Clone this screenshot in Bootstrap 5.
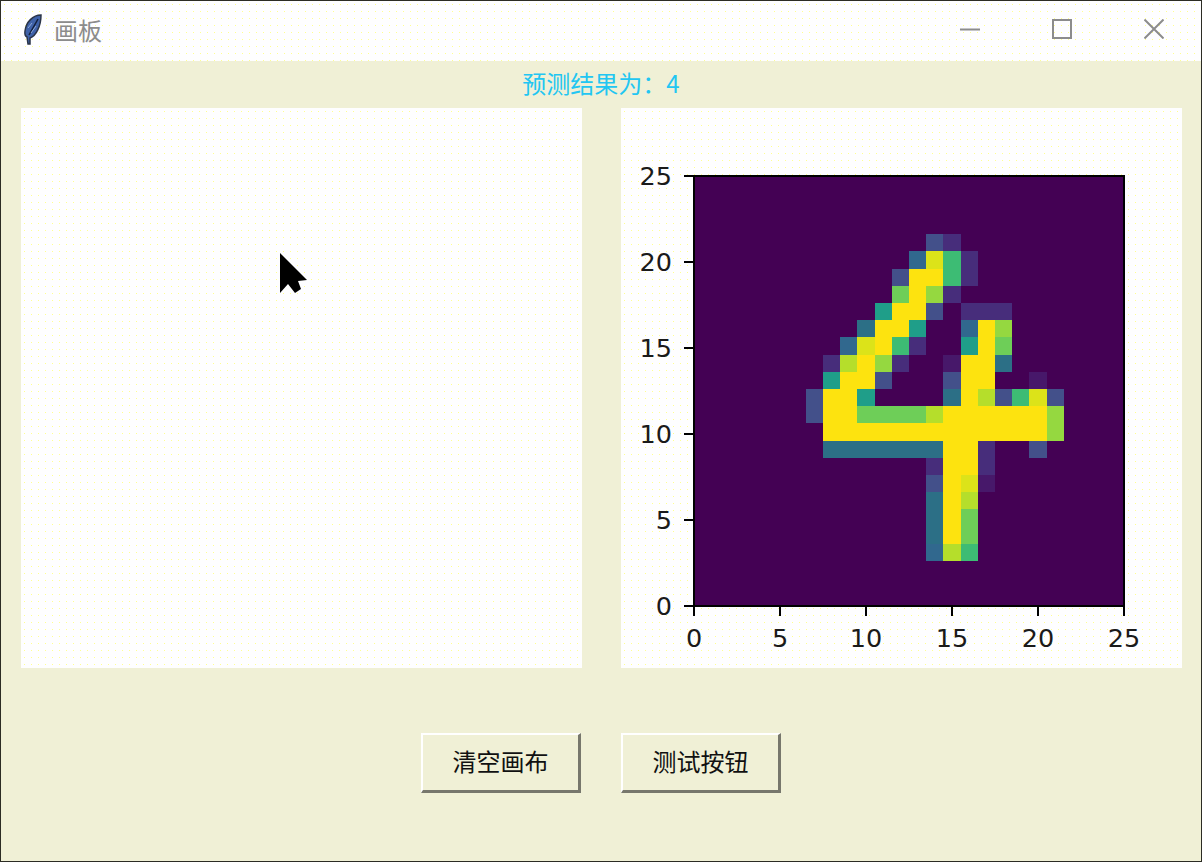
<!DOCTYPE html>
<html lang="zh">

<head>
    <meta charset="UTF-8">
    <meta name="viewport" content="width=device-width, initial-scale=1.0">
    <title>画板</title>
    <link href="https://cdn.jsdelivr.net/npm/bootstrap@5.3.0/dist/css/bootstrap.min.css" rel="stylesheet">
    <style>
        html,
        body {
            height: 100%;
        }

        body {
            margin: 0;
            background: #f0f0d6;
            font-family: "Noto Sans CJK SC", "Liberation Sans", sans-serif;
            overflow: hidden;
        }

        .tk-window {
            width: 1202px;
            height: 862px;
            border: 1px solid #2c2c24;
            background: #f0f0d6;
        }

        .tk-white {
            background: radial-gradient(#ffff90 0.6px, transparent 0.7px) 0 0 / 7px 7px, #fefeff;
        }

        .tk-titlebar {
            height: 60px;
            padding-bottom: 2px;
            color: #8c8c8c;
            font-size: 24px;
        }

        .tk-feather {
            margin-left: 22px;
            margin-right: 11px;
        }

        .tk-ctrl-group {
            margin-right: 1px;
            margin-bottom: 2px;
        }

        .tk-ctrl {
            width: 92px;
        }

        .tk-result {
            height: 47px;
            color: #22c6f2;
            font-size: 24px;
            line-height: 44px;
        }

        .tk-panels {
            gap: 39px;
            padding-left: 20px;
        }

        .tk-panel {
            width: 561px;
            height: 560px;
        }

        .tk-cursor {
            left: 258px;
            top: 144px;
        }

        .tk-buttons {
            gap: 40px;
            margin-top: 65px;
            padding-left: 420px;
        }

        .tk-btn {
            width: 160px;
            height: 60px;
            padding: 0 0 4px;
            border-radius: 0;
            border-width: 2px 3px 3px 2px;
            border-style: solid;
            border-color: #fff #77776c #77776c #fff;
            color: #111;
            font-size: 24px;
            background: transparent;
        }

        .plot-label {
            font-family: "DejaVu Sans", sans-serif;
            font-size: 25.5px;
            fill: #1a1a1a;
        }
    </style>
</head>

<body>
    <div class="tk-window">
        <div class="tk-titlebar tk-white d-flex align-items-center">
            <svg class="tk-feather" width="20" height="32" viewBox="0 0 20 32">
                <path d="M18 1 C10 1 3 8 2 17 C1.500 20 2 22 4 23 L5 30 L7 30 L7 24 C13 22 18 12 18 1 Z" fill="#3f62a8" stroke="#2a3448" stroke-width="1.500"></path>
                <path d="M15 5 L6 21" stroke="#14203c" stroke-width="1.500"></path>
                <path d="M5 14 L9 9 M8 19 L13 12" stroke="#8fa8d8" stroke-width="1"></path>
            </svg>
            <span>画板</span>
            <div class="tk-ctrl-group ms-auto d-flex">
                <div class="tk-ctrl d-flex justify-content-center">
                    <svg width="20" height="20" viewBox="0 0 20 20"><path d="M0 10.500 H20" stroke="#8c8c8c" stroke-width="2"></path></svg>
                </div>
                <div class="tk-ctrl d-flex justify-content-center">
                    <svg width="20" height="20" viewBox="0 0 20 20"><rect x="1" y="1" width="18" height="18" fill="none" stroke="#8c8c8c" stroke-width="2"></rect></svg>
                </div>
                <div class="tk-ctrl d-flex justify-content-center">
                    <svg width="20" height="20" viewBox="0 0 20 20"><path d="M0.500 0.500 L19.500 19.500 M19.500 0.500 L0.500 19.500" stroke="#8c8c8c" stroke-width="2"></path></svg>
                </div>
            </div>
        </div>

        <div class="tk-result text-center">预测结果为：4</div>

        <div class="tk-panels d-flex">
            <div class="tk-panel tk-white position-relative">
                <svg class="tk-cursor position-absolute" width="30" height="42" viewBox="0 0 30 42">
                    <path d="M1 1 L28 28 L19 29 L22 37 L16 41 L9 32 L1 41 Z" fill="#000"></path>
                </svg>
            </div>
            <div class="tk-panel tk-white">
                <svg id="plot" width="561" height="560" viewBox="621 108 561 560"></svg>
            </div>
        </div>

        <div class="tk-buttons d-flex">
            <button type="button" class="btn tk-btn">清空画布</button>
            <button type="button" class="btn tk-btn">测试按钮</button>
        </div>
    </div>

    <script src="https://cdn.jsdelivr.net/npm/bootstrap@5.3.0/dist/js/bootstrap.bundle.min.js"></script>
    <script>
        // viridis steps used by the digit
        const colours = {
            z: '#47186a', a: '#472d7b', b: '#43508a', c: '#31688e', d: '#2c6f86', e: '#1f9e89',
            f: '#3dbc74', g: '#6ece58', h: '#95d840', i: '#b5de2b', j: '#dce319', y: '#fde30f'
        };

        // 15 columns from x=805.8, 19 rows from y=234.2
        const digit = [
            '.......ba......',
            '......cjfa.....',
            '.....byyfa.....',
            '.....gyha......',
            '....eyyb.aaa...',
            '...dyye..cyh...',
            '..cjyfa..eyg...',
            '.aiyha..zyyd...',
            '.eyyb...byy..z.',
            'byye....dyibfjb',
            'byyggggiyyyyyyh',
            '.yyyyyyyyyyyyyh',
            '.dddddddyya..b.',
            '.......ayya....',
            '.......byjz....',
            '.......dyi.....',
            '.......dyg.....',
            '.......dyg.....',
            '.......cif.....'
        ];

        const plot = document.getElementById('plot');
        const step = 17.2;

        function add(tag, attrs, text) {
            const el = document.createElementNS('http://www.w3.org/2000/svg', tag);
            Object.keys(attrs).forEach(k => el.setAttribute(k, attrs[k]));
            if (text !== undefined) el.textContent = text;
            plot.appendChild(el);
        }

        add('rect', { x: 694, y: 176, width: 430, height: 430, fill: '#440154' });

        digit.forEach((row, r) => {
            [...row].forEach((key, c) => {
                if (key === '.') return;
                add('rect', {
                    x: 805.8 + c * step,
                    y: 234.2 + r * step,
                    width: step,
                    height: step,
                    fill: colours[key],
                    'shape-rendering': 'crispEdges'
                });
            });
        });

        add('rect', { x: 694, y: 176, width: 430, height: 430, fill: 'none', stroke: '#000', 'stroke-width': 2 });

        for (let i = 0; i <= 5; i++) {
            const x = 694 + i * 86;
            const y = 606 - i * 86;
            add('path', { d: `M${x} 606 V616 M694 ${y} H684`, stroke: '#000', 'stroke-width': 2 });
            add('text', { class: 'plot-label', x: x, y: 647, 'text-anchor': 'middle' }, i * 5);
            add('text', { class: 'plot-label', x: 672, y: y + 9, 'text-anchor': 'end' }, i * 5);
        }
    </script>
</body>

</html>
